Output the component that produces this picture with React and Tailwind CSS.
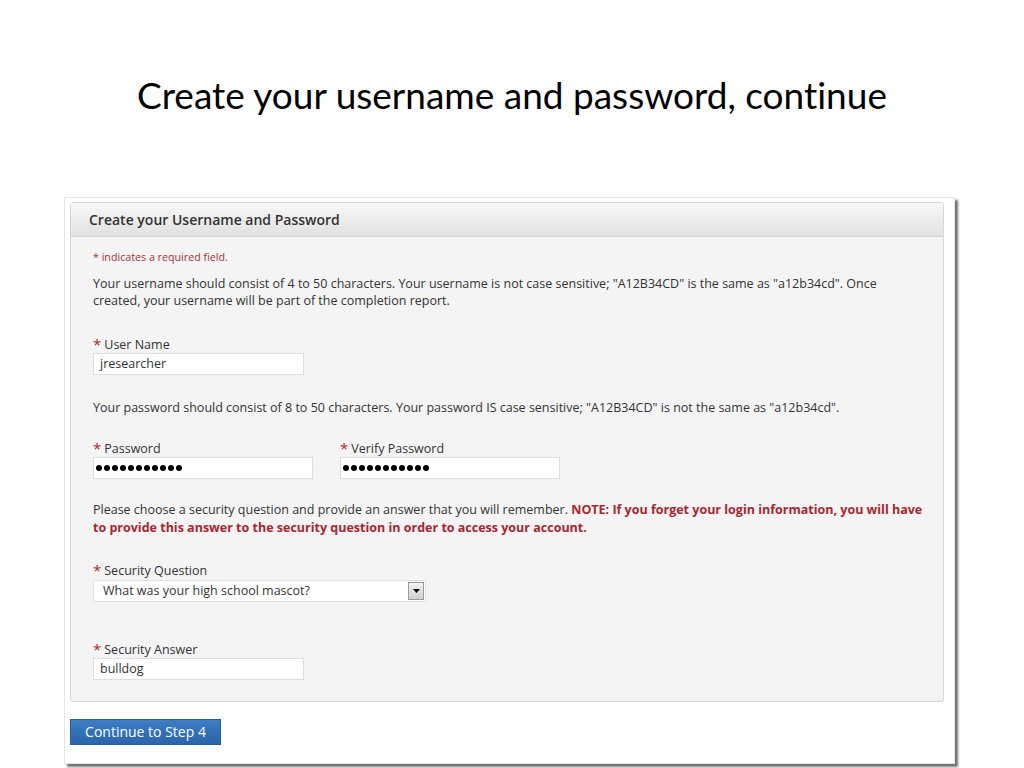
import React from 'react';

const Req = () => <span className="text-[#b3262b] text-[15px] leading-none mr-[3px] relative top-[1px]">*</span>;

const Label = ({ children, className = '' }) => (
  <div className={`h-[17px] leading-[17px] text-[12.5px] text-[#333] ${className}`}>
    <Req />
    {children}
  </div>
);

const Input = ({ width, children }) => (
  <div className={`${width} h-[22px] bg-white border border-[#dedede] flex items-center px-[6px] text-[12.5px] text-[#333]`}>
    {children}
  </div>
);

const Dots = () => (
  <div className="flex gap-[2px] ml-[-4px]">
    {Array.from({ length: 11 }).map((_, i) => (
      <span key={i} className="w-[6px] h-[6px] rounded-full bg-black" />
    ))}
  </div>
);

export default function App() {
  return (
    <div className="w-[1024px] h-[768px] bg-white overflow-hidden font-['Open_Sans',sans-serif]">
      <h1 className="pt-[73px] h-[197px] text-center text-[37px] leading-[44px] text-black font-['Lato',sans-serif] [font-variant-ligatures:none]">
        Create your username and password, continue
      </h1>

      <div className="ml-[64px] w-[891px] h-[567px] bg-white border border-[#e6e6e6] shadow-[3px_3px_2px_rgba(0,0,0,0.55)] pt-[4px] px-[5px]">
        <div className="w-[874px] border border-[#d8d8d8] rounded-[3px] bg-[#f5f4f5]">
          <div className="h-[34px] flex items-center pl-[18px] bg-gradient-to-b from-[#f8f8f8] to-[#e1e1e1] border-b border-[#d4d4d4] text-[14px] font-semibold text-[#333]">
            Create your Username and Password
          </div>

          <div className="pl-[22px] pr-[22px] pt-[13px] pb-[21px]">
            <div className="text-[10.7px] leading-[14px] text-[#a8323a]">* indicates a required field.</div>

            <p className="mt-[11px] text-[12.5px] leading-[17px] text-[#333]">
              Your username should consist of 4 to 50 characters. Your username is not case sensitive; "A12B34CD" is the same as "a12b34cd". Once created, your username will be part of the completion report.
            </p>

            <Label className="mt-[27px]">User Name</Label>
            <Input width="w-[211px]">jresearcher</Input>

            <p className="mt-[24px] text-[12.5px] leading-[17px] text-[#333]">
              Your password should consist of 8 to 50 characters. Your password IS case sensitive; "A12B34CD" is not the same as "a12b34cd".
            </p>

            <div className="mt-[24px] flex gap-[27px]">
              <div>
                <Label>Password</Label>
                <Input width="w-[220px]"><Dots /></Input>
              </div>
              <div>
                <Label>Verify Password</Label>
                <Input width="w-[220px]"><Dots /></Input>
              </div>
            </div>

            <p className="mt-[22px] mr-[-10px] text-[12.5px] leading-[18px] text-[#333]">
              Please choose a security question and provide an answer that you will remember.{' '}
              <span className="font-bold text-[#a8262e]">
                NOTE: If you forget your login information, you will have to provide this answer to the security question in order to access your account.
              </span>
            </p>

            <Label className="mt-[25px]">Security Question</Label>
            <div className="mt-[1px] w-[333px] h-[22px] bg-white border border-[#e2e2e2] flex items-center justify-between pl-[9px] pr-[1px] text-[12.5px] text-[#333]">
              <span>What was your high school mascot?</span>
              <span className="w-[16px] h-[18px] border border-[#9a9a9a] bg-gradient-to-b from-[#f4f4f4] to-[#cfcfcf] flex items-center justify-center">
                <svg width="7" height="4" viewBox="0 0 7 4"><path d="M0 0h7L3.5 4z" fill="#000" /></svg>
              </span>
            </div>

            <Label className="mt-[39px]">Security Answer</Label>
            <Input width="w-[211px]">bulldog</Input>
          </div>
        </div>

        <button className="mt-[17px] w-[151px] h-[26px] bg-gradient-to-b from-[#3c7ec6] to-[#2b64a9] border border-[#2a5e9e] text-white text-[14px] leading-none">
          Continue to Step 4
        </button>
      </div>
    </div>
  );
}
